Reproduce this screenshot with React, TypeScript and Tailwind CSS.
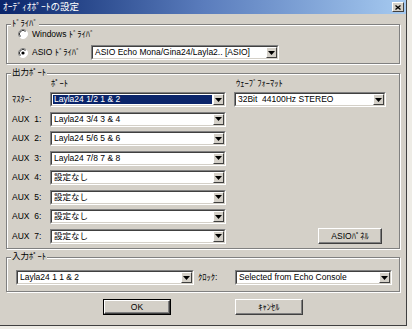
import React from "react";

const FONT = "font-['Liberation_Sans','Noto_Sans_CJK_JP',sans-serif]";

function Arrow() {
  return (
    <svg width="7" height="4" viewBox="0 0 7 4">
      <polygon points="0,0 7,0 3.5,4" fill="#000" />
    </svg>
  );
}

function Select({
  text,
  className,
  highlight,
}: {
  text: string;
  className: string;
  highlight?: boolean;
}) {
  return (
    <div
      className={`h-[15px] shrink-0 border border-t-[#808080] border-l-[#808080] border-b-white border-r-white ${className}`}
    >
      <div className="flex h-full border border-t-[#404040] border-l-[#404040] border-b-[#d4d0c8] border-r-[#d4d0c8] bg-white">
        <div className="flex min-w-0 flex-1 items-center p-[1px]">
          <div
            className={`flex h-full flex-1 items-center whitespace-pre pl-[1px] leading-none ${
              highlight ? "bg-[#0a246a] text-white" : ""
            }`}
          >
            {text}
          </div>
        </div>
        <div className="flex h-full w-[11px] items-center justify-center border border-t-white border-l-white border-b-[#404040] border-r-[#404040] bg-[#d4d0c8]">
          <Arrow />
        </div>
      </div>
    </div>
  );
}

function Radio({ checked }: { checked?: boolean }) {
  return (
    <svg width="10" height="10" viewBox="0 0 10 10" className="shrink-0">
      <circle cx="5" cy="5" r="4.5" fill="#fff" />
      <path d="M1.8 8.2 A4.5 4.5 0 0 1 8.2 1.8" stroke="#808080" fill="none" />
      <path d="M8.2 1.8 A4.5 4.5 0 0 1 1.8 8.2" stroke="#ffffff" fill="none" />
      <path d="M2.5 7.5 A3.5 3.5 0 0 1 7.5 2.5" stroke="#404040" fill="none" />
      {checked && <circle cx="5" cy="5" r="1.6" fill="#000" />}
    </svg>
  );
}

function Group({
  label,
  className,
  children,
}: {
  label: string;
  className: string;
  children: React.ReactNode;
}) {
  return (
    <div
      className={`relative ml-[6px] w-[394px] shrink-0 border border-[#808080] shadow-[inset_1px_1px_0_#fff,1px_1px_0_#fff] ${className}`}
    >
      <span className="absolute -top-[8px] left-[4px] bg-[#d4d0c8] px-[1px] leading-[12px]">
        {label}
      </span>
      {children}
    </div>
  );
}

function Button({ label, isDefault }: { label: string; isDefault?: boolean }) {
  return (
    <div
      className={`h-[16px] w-[68px] ${isDefault ? "border border-black" : ""}`}
    >
      <div className="flex h-full items-center justify-center border border-t-white border-l-white border-b-[#404040] border-r-[#404040] bg-[#d4d0c8] shadow-[inset_-1px_-1px_0_#808080]">
        {label}
      </div>
    </div>
  );
}

export default function App() {
  const rows: { label: string; text: string; highlight?: boolean }[] = [
    { label: "ﾏｽﾀｰ:", text: "Layla24 1/2 1 & 2", highlight: true },
    { label: "AUX  1:", text: "Layla24 3/4 3 & 4" },
    { label: "AUX  2:", text: "Layla24 5/6 5 & 6" },
    { label: "AUX  3:", text: "Layla24 7/8 7 & 8" },
    { label: "AUX  4:", text: "設定なし" },
    { label: "AUX  5:", text: "設定なし" },
    { label: "AUX  6:", text: "設定なし" },
    { label: "AUX  7:", text: "設定なし" },
  ];

  return (
    <div
      className={`h-[329px] w-[412px] overflow-hidden bg-[#eeece6] text-[8.5px] text-black ${FONT}`}
    >
      <div className="flex h-[326px] w-[407px] flex-col border-b border-r border-[#404040] bg-[#d4d0c8]">
        {/* Title bar */}
        <div className="flex h-[14px] shrink-0 items-center justify-between bg-linear-to-r from-[#0a246a] via-[#5a7cbc] to-[#a6caf0] pl-[3px] pr-[2px]">
          <span className="text-[9.5px] leading-none text-white">
            ｵｰﾃﾞｨｵﾎﾟｰﾄの設定
          </span>
          <div className="flex h-[10px] w-[12px] items-center justify-center border border-t-white border-l-white border-b-[#404040] border-r-[#404040] bg-[#d4d0c8]">
            <svg width="6" height="5" viewBox="0 0 6 5">
              <path d="M0.5 0.5 L5.5 4.5 M5.5 0.5 L0.5 4.5" stroke="#000" strokeWidth="1.3" />
            </svg>
          </div>
        </div>

        {/* Driver group */}
        <Group label="ﾄﾞﾗｲﾊﾞ" className="mt-[10px] h-[40px]">
          <div className="flex flex-col pl-[11px] pt-[3px]">
            <div className="flex h-[12px] items-center gap-[4px]">
              <Radio />
              <span>Windows ﾄﾞﾗｲﾊﾞ</span>
            </div>
            <div className="mt-[5px] flex items-center">
              <Radio checked />
              <span className="ml-[4px] w-[59px]">ASIO ﾄﾞﾗｲﾊﾞ</span>
              <Select
                text="ASIO Echo Mona/Gina24/Layla2.. [ASIO]"
                className="w-[188px]"
              />
            </div>
          </div>
        </Group>

        {/* Output group */}
        <Group label="出力ﾎﾟｰﾄ" className="mt-[9px] h-[176px]">
          <div className="flex flex-col pl-[5px] pt-[3px]">
            <div className="flex h-[12px] items-center">
              <span className="ml-[39px] w-[185px]">ﾎﾟｰﾄ</span>
              <span>ｳｪｰﾌﾞﾌｫｰﾏｯﾄ</span>
            </div>
            <div className="mt-[3px] flex flex-col gap-[4.5px]">
              {rows.map((r, i) => (
                <div key={i} className="flex h-[15px] items-center">
                  <span className="w-[38px] whitespace-pre">{r.label}</span>
                  <Select
                    text={r.text}
                    className="w-[176px]"
                    highlight={r.highlight}
                  />
                  {i === 0 && (
                    <Select
                      text="32Bit  44100Hz STEREO"
                      className="ml-[8px] w-[152px]"
                    />
                  )}
                  {i === 7 && (
                    <div className="ml-[92px]">
                      <div className="flex h-[16px] w-[64px] items-center justify-center border border-t-white border-l-white border-b-[#404040] border-r-[#404040] bg-[#d4d0c8] shadow-[inset_-1px_-1px_0_#808080]">
                        ASIOﾊﾟﾈﾙ
                      </div>
                    </div>
                  )}
                </div>
              ))}
            </div>
          </div>
        </Group>

        {/* Input group */}
        <Group label="入力ﾎﾟｰﾄ" className="mt-[8px] h-[35px]">
          <div className="flex items-center pl-[9px] pt-[12px]">
            <Select text="Layla24 1 1 & 2" className="w-[178px]" />
            <span className="ml-[4px] w-[37px]">ｸﾛｯｸ:</span>
            <Select text="Selected from Echo Console" className="w-[157px]" />
          </div>
        </Group>

        {/* Buttons */}
        <div className="mt-[7px] flex justify-center gap-[64px]">
          <Button label="OK" isDefault />
          <Button label="ｷｬﾝｾﾙ" />
        </div>
      </div>
    </div>
  );
}
